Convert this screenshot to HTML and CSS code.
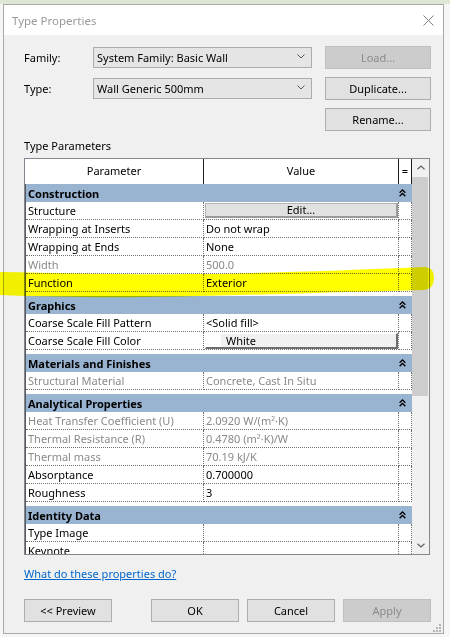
FILE: index.html
```html
<!DOCTYPE html>
<html>
<head>
<meta charset="utf-8">
<link rel="stylesheet" href="styles.css">
</head>
<body>
<div class="window">
  <div class="titlebar">
    <span class="title">Type Properties</span>
    <svg class="close" viewBox="0 0 11 11"><path d="M0.5 0.5L10.5 10.5M10.5 0.5L0.5 10.5" stroke="#808080" stroke-width="1" fill="none"/></svg>
  </div>
  <div class="content">
    <div class="form">
      <span class="lbl">Family:</span>
      <div class="select"><span>System Family: Basic Wall</span><svg class="chev" viewBox="0 0 8 5"><path d="M0.5 0.5L4 4L7.5 0.5" stroke="#555" fill="none"/></svg></div>
      <span></span>
      <div class="btn disabled">Load...</div>
      <span class="lbl">Type:</span>
      <div class="select"><span>Wall Generic 500mm</span><svg class="chev" viewBox="0 0 8 5"><path d="M0.5 0.5L4 4L7.5 0.5" stroke="#555" fill="none"/></svg></div>
      <span></span>
      <div class="btn">Duplicate...</div>
      <span></span><span></span><span></span>
      <div class="btn">Rename...</div>
    </div>
    <div class="section-label">Type Parameters</div>
    <div class="table">
      <div class="grid">
        <div class="hrow"><div class="hc">Parameter</div><div class="hc">Value</div><div class="hc">=</div></div>
        <div class="rows">
          <div class="group first"><div class="band"><span>Construction</span><svg class="coll" viewBox="0 0 7 8"><path d="M0.6 3.8L3.5 1L6.4 3.8M0.6 7.3L3.5 4.5L6.4 7.3" stroke="#000" stroke-width="1.3" fill="none"/></svg></div></div>
          <div class="row"><div class="c">Structure</div><div class="c v"><div class="cellbtn">Edit...</div></div><div class="c"></div></div>
          <div class="row"><div class="c">Wrapping at Inserts</div><div class="c">Do not wrap</div><div class="c"></div></div>
          <div class="row"><div class="c">Wrapping at Ends</div><div class="c">None</div><div class="c"></div></div>
          <div class="row dis"><div class="c">Width</div><div class="c">500.0</div><div class="c"></div></div>
          <div class="row"><div class="c">Function</div><div class="c">Exterior</div><div class="c"></div></div>
          <div class="group"><div class="band"><span>Graphics</span><svg class="coll" viewBox="0 0 7 8"><path d="M0.6 3.8L3.5 1L6.4 3.8M0.6 7.3L3.5 4.5L6.4 7.3" stroke="#000" stroke-width="1.3" fill="none"/></svg></div></div>
          <div class="row"><div class="c">Coarse Scale Fill Pattern</div><div class="c">&lt;Solid fill&gt;</div><div class="c"></div></div>
          <div class="row"><div class="c">Coarse Scale Fill Color</div><div class="c v"><div class="colorbtn"><span class="swatch"></span><span>White</span></div></div><div class="c"></div></div>
          <div class="group"><div class="band"><span>Materials and Finishes</span><svg class="coll" viewBox="0 0 7 8"><path d="M0.6 3.8L3.5 1L6.4 3.8M0.6 7.3L3.5 4.5L6.4 7.3" stroke="#000" stroke-width="1.3" fill="none"/></svg></div></div>
          <div class="row dis"><div class="c">Structural Material</div><div class="c">Concrete, Cast In Situ</div><div class="c"></div></div>
          <div class="group"><div class="band"><span>Analytical Properties</span><svg class="coll" viewBox="0 0 7 8"><path d="M0.6 3.8L3.5 1L6.4 3.8M0.6 7.3L3.5 4.5L6.4 7.3" stroke="#000" stroke-width="1.3" fill="none"/></svg></div></div>
          <div class="row dis"><div class="c">Heat Transfer Coefficient (U)</div><div class="c">2.0920 W/(m²·K)</div><div class="c"></div></div>
          <div class="row dis"><div class="c">Thermal Resistance (R)</div><div class="c">0.4780 (m²·K)/W</div><div class="c"></div></div>
          <div class="row dis"><div class="c">Thermal mass</div><div class="c">70.19 kJ/K</div><div class="c"></div></div>
          <div class="row"><div class="c">Absorptance</div><div class="c">0.700000</div><div class="c"></div></div>
          <div class="row"><div class="c">Roughness</div><div class="c">3</div><div class="c"></div></div>
          <div class="group"><div class="band"><span>Identity Data</span><svg class="coll" viewBox="0 0 7 8"><path d="M0.6 3.8L3.5 1L6.4 3.8M0.6 7.3L3.5 4.5L6.4 7.3" stroke="#000" stroke-width="1.3" fill="none"/></svg></div></div>
          <div class="row"><div class="c">Type Image</div><div class="c"></div><div class="c"></div></div>
          <div class="row"><div class="c">Keynote</div><div class="c"></div><div class="c"></div></div>
        </div>
      </div>
      <div class="scrollbar">
        <div class="arrow"><svg viewBox="0 0 8 5"><path d="M0.5 4.3L4 1L7.5 4.3" stroke="#606060" stroke-width="1.2" fill="none"/></svg></div>
        <div class="track"><div class="thumb"></div></div>
        <div class="arrow"><svg viewBox="0 0 8 5"><path d="M0.5 0.7L4 4L7.5 0.7" stroke="#606060" stroke-width="1.2" fill="none"/></svg></div>
      </div>
    </div>
    <a class="link">What do these properties do?</a>
    <div class="footer">
      <div class="btn">&lt;&lt; Preview</div>
      <div class="spacer"></div>
      <div class="btn">OK</div>
      <div class="btn">Cancel</div>
      <div class="btn disabled">Apply</div>
    </div>
  </div>
  <svg class="grip" viewBox="0 0 8 8"><rect x="6" y="0" width="2" height="2" fill="#b5b5b5"/><rect x="3" y="3" width="2" height="2" fill="#b5b5b5"/><rect x="6" y="3" width="2" height="2" fill="#b5b5b5"/><rect x="0" y="6" width="2" height="2" fill="#b5b5b5"/><rect x="3" y="6" width="2" height="2" fill="#b5b5b5"/><rect x="6" y="6" width="2" height="2" fill="#b5b5b5"/></svg>
</div>
<svg class="highlight" viewBox="0 0 450 637">
  <defs><filter id="soft"><feGaussianBlur stdDeviation="0.7"/></filter></defs>
  <path filter="url(#soft)" d="M0 272 C60 273 120 275 200 274 C280 273 350 270 424 267 Q434 267 434 278 Q434 289 424 290 C340 292 260 295 180 296.5 C110 298 50 297 0 295 Z" fill="#ffff00"/>
</svg>
</body>
</html>
```
FILE: styles.css
```css
html, body {
  margin: 0;
  padding: 0;
}
body {
  width: 450px;
  height: 637px;
  overflow: hidden;
  position: relative;
  background: linear-gradient(#dfe6d3 0 4px, #f6f6f6 4px);
  font-family: "Noto Sans", sans-serif;
  font-size: 11px;
  color: #000;
}
.window {
  box-sizing: border-box;
  width: 441px;
  height: 630px;
  margin: 4px 0 0 3px;
  border: 1px solid #a9a9a9;
  background: #f0f0f0;
  position: relative;
  display: flex;
  flex-direction: column;
}
.titlebar {
  height: 30px;
  flex: none;
  background: #fff;
  display: flex;
  align-items: center;
  justify-content: space-between;
  padding: 0 9px 0 8px;
}
.title {
  color: #999;
  font-size: 11.5px;
}
.close {
  width: 11px;
  height: 11px;
}
.content {
  flex: 1;
  padding: 11px 12px 11px 20px;
  display: flex;
  flex-direction: column;
}
.form {
  display: grid;
  grid-template-columns: 69px 219px 13px 106px;
  grid-template-rows: repeat(3, 23px);
  row-gap: 8px;
}
.lbl {
  align-self: center;
}
.select {
  box-sizing: border-box;
  height: 21px;
  align-self: center;
  border: 1px solid #acacac;
  background: #e5e5e5;
  display: flex;
  align-items: center;
  justify-content: space-between;
  padding: 0 6px 0 3px;
}
.chev {
  width: 8px;
  height: 5px;
  margin-top: -2px;
}
.btn {
  box-sizing: border-box;
  height: 23px;
  border: 1px solid #adadad;
  background: #e1e1e1;
  display: flex;
  align-items: center;
  justify-content: center;
}
.btn.disabled {
  background: #cccccc;
  border-color: #bfbfbf;
  color: #8a8a8a;
}
.section-label {
  margin-top: 7px;
  height: 15px;
  line-height: 15px;
  margin-bottom: 5px;
}
.table {
  box-sizing: border-box;
  width: 406px;
  height: 397px;
  flex: none;
  border: 1px solid #828790;
  background: #fff;
  display: flex;
  overflow: hidden;
}
.grid {
  width: 387px;
  flex: none;
  overflow: hidden;
}
.hrow {
  display: grid;
  grid-template-columns: 179px 195px 13px;
  height: 25px;
}
.hc {
  box-sizing: border-box;
  border-right: 1px solid #1e1e1e;
  display: flex;
  align-items: center;
  justify-content: center;
  padding-bottom: 2px;
}
.rows {
  border-left: 1px solid #5a5a5a;
}
.group {
  height: 22px;
  box-sizing: border-box;
  padding-top: 4px;
}
.group.first {
  height: 18px;
  padding-top: 0;
}
.band {
  height: 18px;
  background: #99b4d1;
  font-weight: bold;
  display: flex;
  align-items: center;
  justify-content: space-between;
  padding: 0 6px 0 2px;
}
.coll {
  width: 7px;
  height: 8px;
}
.row {
  display: grid;
  grid-template-columns: 178px 195px 13px;
  height: 18px;
}
.c {
  box-sizing: border-box;
  height: 18px;
  border-right: 1px dotted #707070;
  border-bottom: 1px dotted #707070;
  padding-left: 2px;
  line-height: 17px;
  white-space: nowrap;
  overflow: hidden;
}
.c.v {
  padding: 1px 0 0 1px;
}
.row.dis .c {
  color: #8a8a8a;
}
.cellbtn {
  box-sizing: border-box;
  height: 15px;
  width: 193px;
  background: #e1e1e1;
  border: 1px solid #b4b4b4;
  border-right: 2px solid #9a9a9a;
  border-bottom: 2px solid #9a9a9a;
  line-height: 12px;
  text-align: center;
}
.colorbtn {
  box-sizing: border-box;
  height: 16px;
  width: 193px;
  background: #f0f0f0;
  border-top: 1px solid #fff;
  border-left: 1px solid #fff;
  border-right: 2px solid #6d6d6d;
  border-bottom: 2px solid #6d6d6d;
  display: flex;
  align-items: center;
  line-height: 13px;
}
.swatch {
  width: 15px;
  height: 13px;
  background: #fff;
  margin-right: 5px;
}
.scrollbar {
  width: 17px;
  flex: none;
  background: #f0f0f0;
  display: flex;
  flex-direction: column;
}
.arrow {
  height: 17px;
  flex: none;
  display: flex;
  align-items: center;
  justify-content: center;
}
.arrow svg {
  width: 8px;
  height: 5px;
}
.track {
  flex: 1;
}
.thumb {
  margin: 1px 0 0 0;
  width: 16px;
  height: 219px;
  background: #cdcdcd;
}
.link {
  margin-top: 11px;
  height: 16px;
  line-height: 16px;
  color: #0066cc;
  text-decoration: underline;
  align-self: flex-start;
}
.footer {
  margin-top: 17px;
  display: flex;
  gap: 8px;
}
.footer .btn {
  width: 88px;
}
.spacer {
  flex: 1;
}
.grip {
  position: absolute;
  right: 2px;
  bottom: 1px;
  width: 8px;
  height: 8px;
}
.highlight {
  position: absolute;
  left: 0;
  top: 0;
  width: 450px;
  height: 637px;
  pointer-events: none;
  mix-blend-mode: multiply;
}
```
